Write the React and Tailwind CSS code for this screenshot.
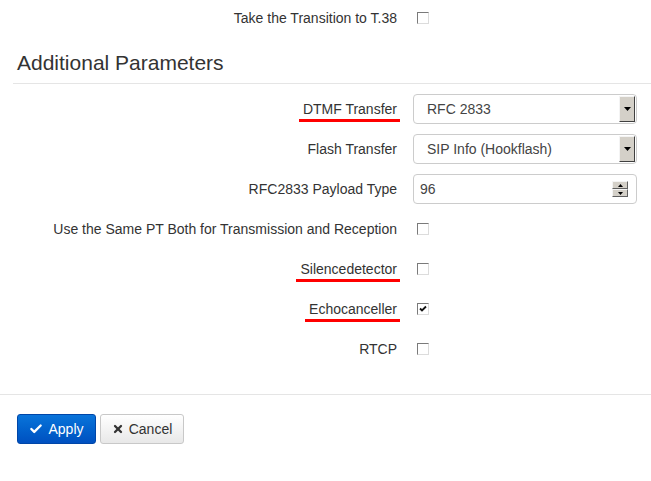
import { Check, X } from 'lucide-react';

const Checkbox = ({ checked }) => (
    <div className="w-[12px] h-[12px] border border-t-[#7a7a7a] border-l-[#7a7a7a] border-b-[#dcdcdc] border-r-[#dcdcdc] bg-white flex items-center justify-center">
        {checked && (
            <svg width="8" height="8" viewBox="0 0 8 8">
                <path d="M1 3.5 L3 5.5 L7 1.5" stroke="#111" strokeWidth="1.8" fill="none" />
            </svg>
        )}
    </div>
);

const Marked = ({ children }) => (
    <span className="relative">
        {children}
        <span className="absolute left-[-4px] right-[-3px] top-[18px] h-[3px] bg-[#f00]" />
    </span>
);

const ArrowButton = () => (
    <div className="w-[16px] self-stretch my-[1px] mr-[1px] bg-[#d4d0c8] border border-t-[#f4f4f4] border-l-[#f4f4f4] border-b-[#404040] border-r-[#404040] flex items-center justify-center">
        <svg width="7" height="4" viewBox="0 0 7 4"><path d="M0 0 H7 L3.5 4 Z" fill="#000" /></svg>
    </div>
);

const Select = ({ value }) => (
    <div className="w-[224px] h-[30px] border border-[#cccccc] rounded-[4px] flex items-center justify-between bg-white">
        <span className="pl-[13px] text-[14px] text-[#444]">{value}</span>
        <ArrowButton />
    </div>
);

const NumberInput = ({ value }) => (
    <div className="w-[224px] h-[30px] border border-[#cccccc] rounded-[4px] flex items-center justify-between bg-white">
        <span className="pl-[6px] text-[14px] text-[#444]">{value}</span>
        <div className="mr-[8px] flex flex-col w-[16px]">
            {['M0 3 H5 L2.5 0 Z', 'M0 0 H5 L2.5 3 Z'].map((d, i) => (
                <div key={i} className="h-[8px] bg-[#d4d0c8] border border-t-[#f4f4f4] border-l-[#f4f4f4] border-b-[#606060] border-r-[#606060] flex items-center justify-center">
                    <svg width="5" height="3" viewBox="0 0 5 3"><path d={d} fill="#000" /></svg>
                </div>
            ))}
        </div>
    </div>
);

const Row = ({ label, children }) => (
    <div className="h-[40px] flex items-center">
        <div className="w-[397px] text-right text-[14px] text-[#333]">{label}</div>
        <div className="ml-[16px] flex items-center">{children}</div>
    </div>
);

const CheckRow = ({ label, checked }) => (
    <Row label={label}>
        <div className="ml-[4px]"><Checkbox checked={checked} /></div>
    </Row>
);

export default function App() {
    return (
        <div className="w-[651px] h-[481px] bg-white overflow-hidden" style={{ fontFamily: '"Liberation Sans", Arial, sans-serif' }}>
            <div className="h-[35px] pt-[1px] flex items-center">
                <div className="w-[397px] text-right text-[14px] text-[#333]">Take the Transition to T.38</div>
                <div className="ml-[20px]"><Checkbox /></div>
            </div>

            <h3 className="pl-[17px] pt-[15px] text-[21px] leading-[26px] text-[#333]">Additional Parameters</h3>
            <div className="ml-[13px] mt-[7px] border-t border-[#e5e5e5]" />

            <div className="pt-[5px]">
                <Row label={<Marked>DTMF Transfer</Marked>}>
                    <Select value="RFC 2833" />
                </Row>
                <Row label="Flash Transfer">
                    <Select value="SIP Info (Hookflash)" />
                </Row>
                <Row label="RFC2833 Payload Type">
                    <NumberInput value="96" />
                </Row>
                <CheckRow label="Use the Same PT Both for Transmission and Reception" />
                <CheckRow label={<Marked>Silencedetector</Marked>} />
                <CheckRow label={<Marked>Echocanceller</Marked>} checked />
                <CheckRow label="RTCP" />
            </div>

            <div className="mt-[25px] border-t border-[#e5e5e5]" />

            <div className="pl-[17px] pt-[19px] flex gap-[4px]">
                <button className="h-[30px] w-[79px] rounded-[3px] border border-[#0046a8] bg-gradient-to-b from-[#0a74da] to-[#0050c0] text-white text-[14px] flex items-center justify-center gap-[5px]">
                    <Check size={14} strokeWidth={4} />
                    <span>Apply</span>
                </button>
                <button className="h-[30px] w-[84px] rounded-[3px] border border-[#c8c8c8] bg-gradient-to-b from-white to-[#e8e8e8] text-[#333] text-[14px] flex items-center justify-center gap-[5px]">
                    <X size={12} strokeWidth={4.5} />
                    <span>Cancel</span>
                </button>
            </div>
        </div>
    );
}
